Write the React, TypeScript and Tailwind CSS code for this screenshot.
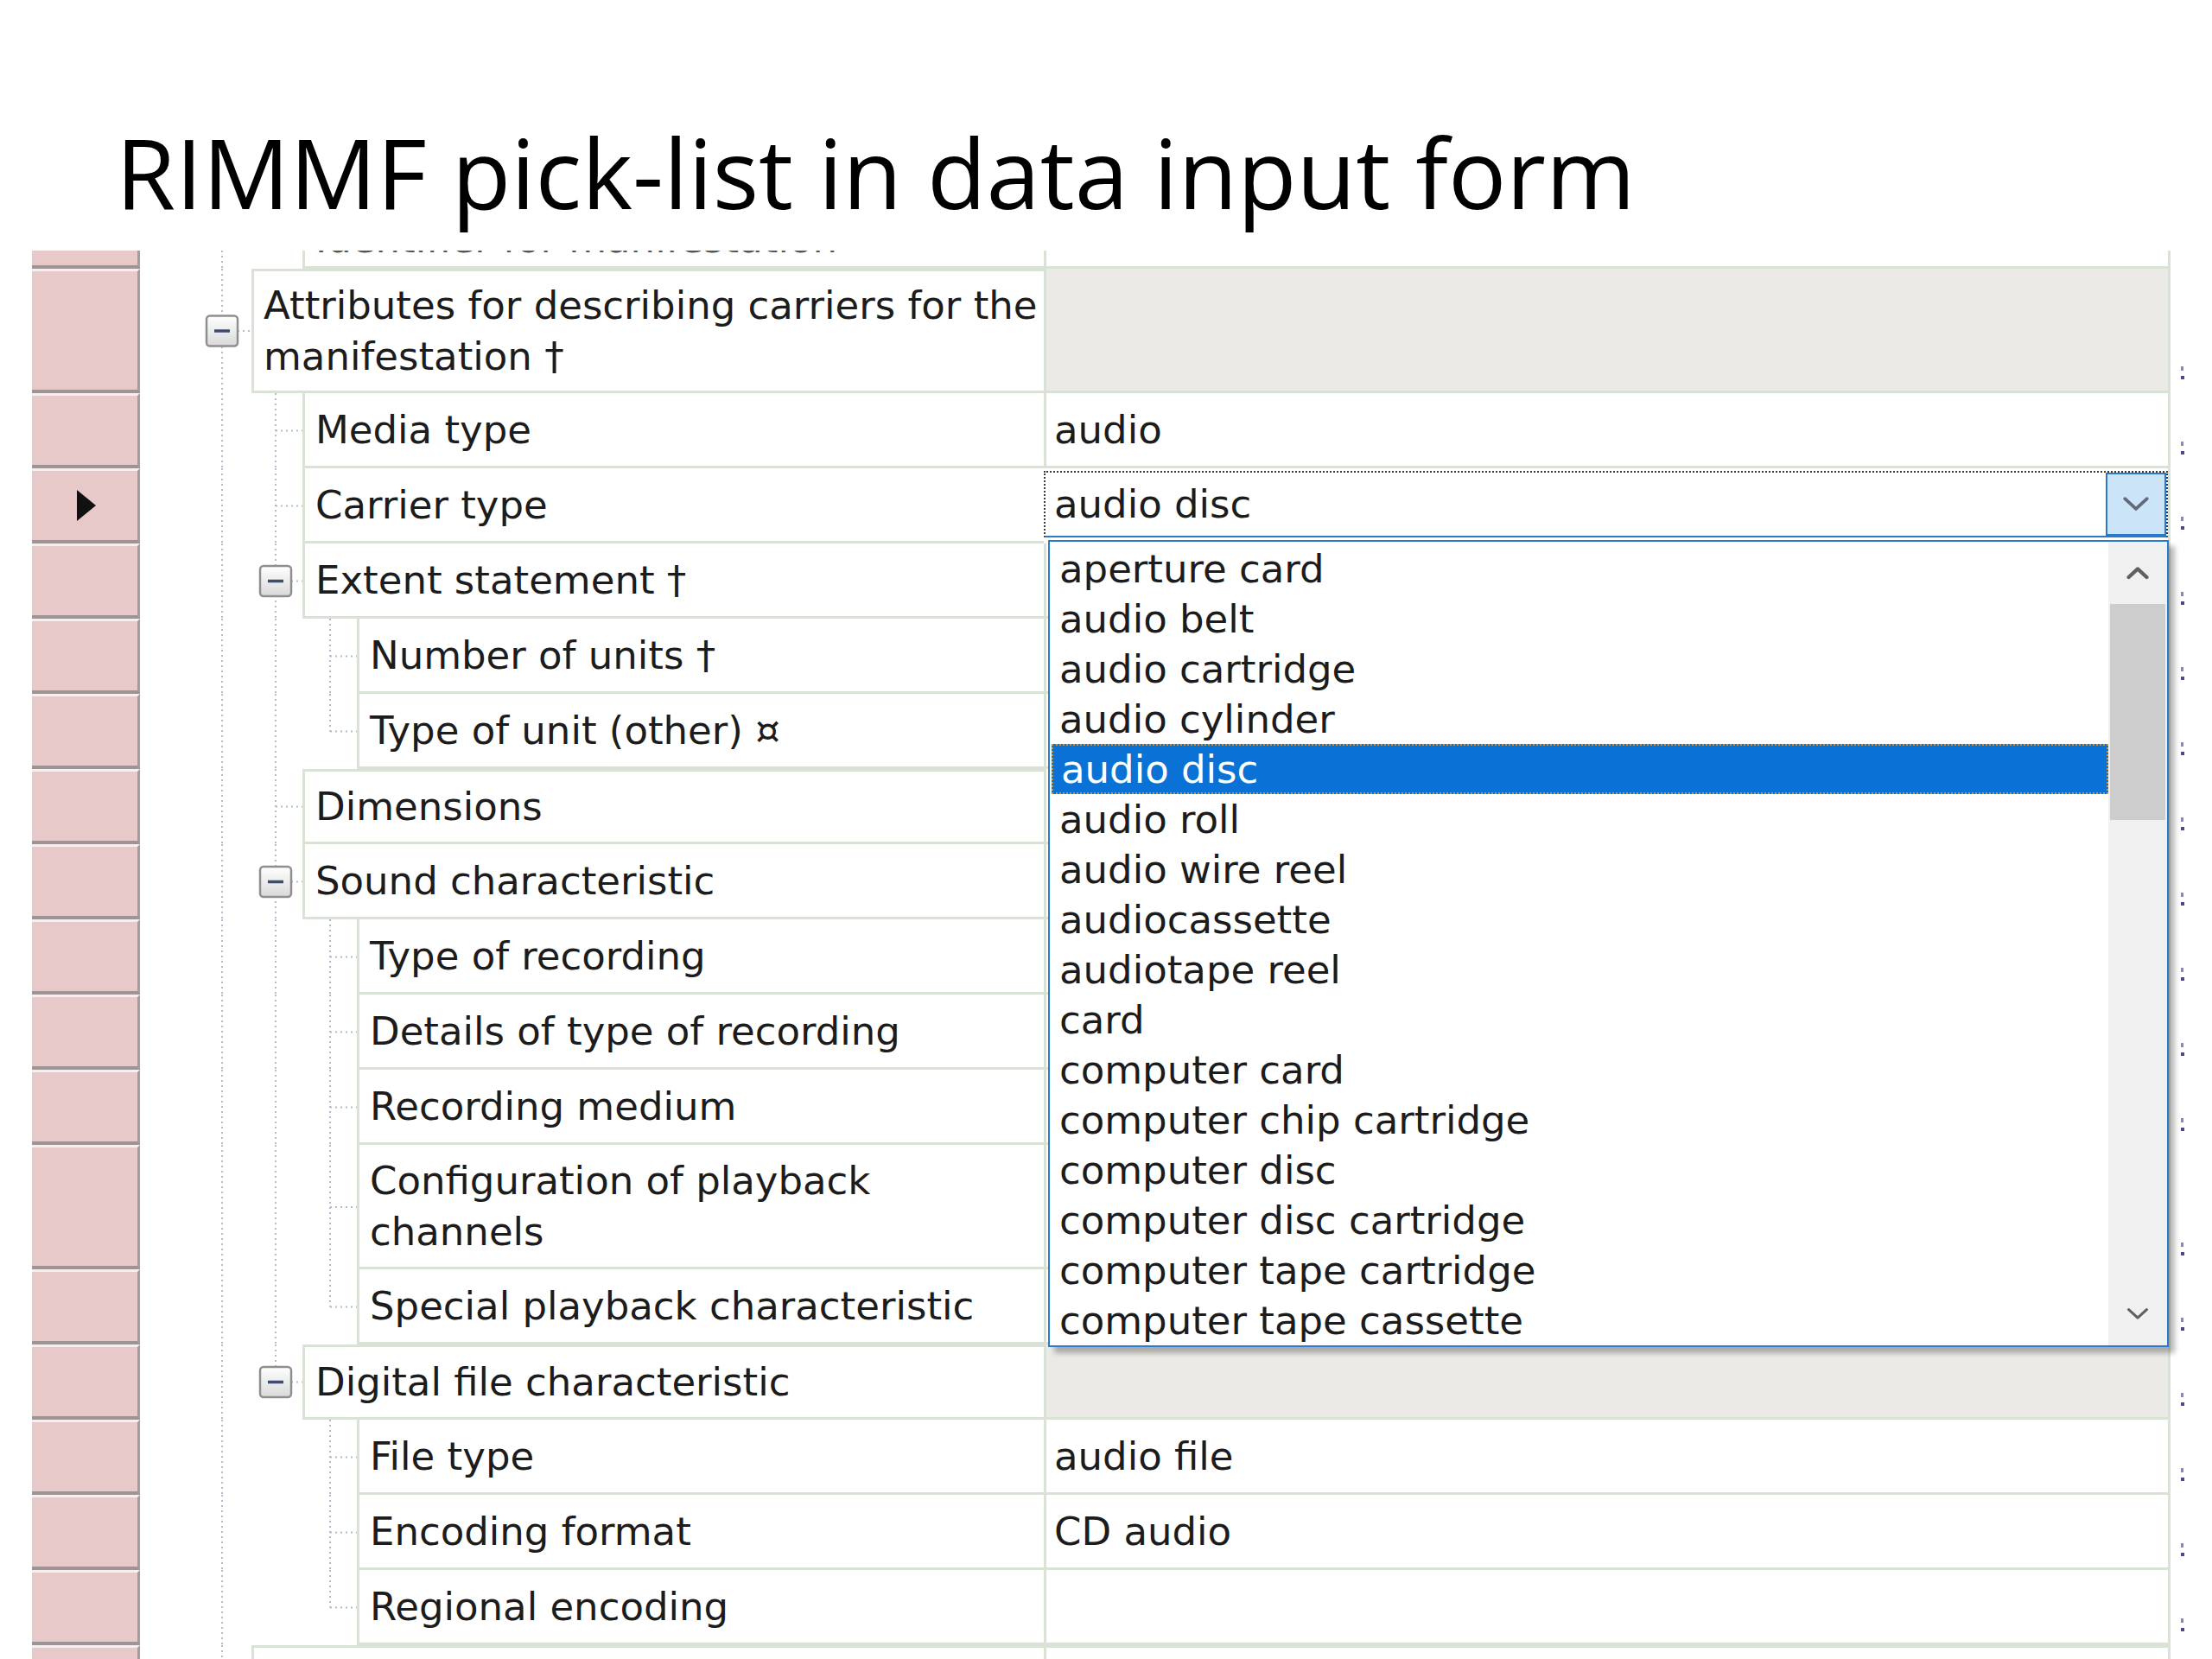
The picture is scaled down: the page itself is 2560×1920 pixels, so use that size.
import React from 'react';

type G = 'none' | 'full' | 'top' | 'bottom';
type Row = {
  label: string[];
  level: 1 | 2 | 3;
  h: number;
  icon?: boolean;
  g2: G;
  g3: G;
  gray?: boolean;
  value?: string;
  combo?: boolean;
  arrow?: boolean;
  clipped?: boolean;
  topBorder?: boolean;
  final?: boolean;
};

const rows: Row[] = [
  { label: ['Identifier for manifestation'], level: 2, h: 21, g2: 'none', g3: 'none', clipped: true },
  { label: ['Attributes for describing carriers for the', 'manifestation †'], level: 1, h: 144, icon: true, g2: 'bottom', g3: 'none', gray: true, topBorder: true },
  { label: ['Media type'], level: 2, h: 87, g2: 'full', g3: 'none', value: 'audio' },
  { label: ['Carrier type'], level: 2, h: 87, g2: 'full', g3: 'none', combo: true, arrow: true },
  { label: ['Extent statement †'], level: 2, h: 87, icon: true, g2: 'full', g3: 'bottom' },
  { label: ['Number of units †'], level: 3, h: 87, g2: 'full', g3: 'full' },
  { label: ['Type of unit (other) ¤'], level: 3, h: 87, g2: 'full', g3: 'top' },
  { label: ['Dimensions'], level: 2, h: 87, g2: 'full', g3: 'none', topBorder: true },
  { label: ['Sound characteristic'], level: 2, h: 87, icon: true, g2: 'full', g3: 'bottom' },
  { label: ['Type of recording'], level: 3, h: 87, g2: 'full', g3: 'full' },
  { label: ['Details of type of recording'], level: 3, h: 87, g2: 'full', g3: 'full' },
  { label: ['Recording medium'], level: 3, h: 87, g2: 'full', g3: 'full' },
  { label: ['Configuration of playback', 'channels'], level: 3, h: 144, g2: 'full', g3: 'full' },
  { label: ['Special playback characteristic'], level: 3, h: 87, g2: 'full', g3: 'top' },
  { label: ['Digital file characteristic'], level: 2, h: 87, icon: true, g2: 'top', g3: 'bottom', gray: true, topBorder: true },
  { label: ['File type'], level: 3, h: 87, g2: 'none', g3: 'full', value: 'audio file' },
  { label: ['Encoding format'], level: 3, h: 87, g2: 'none', g3: 'full', value: 'CD audio' },
  { label: ['Regional encoding'], level: 3, h: 87, g2: 'none', g3: 'top' },
  { label: [''], level: 1, h: 16, g2: 'none', g3: 'none', topBorder: true, final: true },
];

const items = [
  'aperture card',
  'audio belt',
  'audio cartridge',
  'audio cylinder',
  'audio disc',
  'audio roll',
  'audio wire reel',
  'audiocassette',
  'audiotape reel',
  'card',
  'computer card',
  'computer chip cartridge',
  'computer disc',
  'computer disc cartridge',
  'computer tape cartridge',
  'computer tape cassette',
];

const HCLS: Record<number, string> = {
  21: 'h-[21px]',
  87: 'h-[87px]',
  144: 'h-[144px]',
  16: 'h-[16px]',
};
const IW: Record<number, number> = { 1: 129, 2: 188, 3: 251 };
const LCLS: Record<number, string> = { 1: 'w-[917px] pl-[11px]', 2: 'w-[858px] pl-[12px]', 3: 'w-[795px] pl-[12px]' };
const GX: Record<number, number> = { 1: 95, 2: 157, 3: 220 };

const DOT = { stroke: '#b2bccb', strokeWidth: 2, strokeDasharray: '2 4' };

function vline(x: number, mode: G, h: number, mid: number, key: string) {
  if (mode === 'none') return null;
  let y1 = 0;
  let y2 = h;
  if (mode === 'top') y2 = mid;
  if (mode === 'bottom') y1 = mid + 18;
  return <line key={key} x1={x} y1={y1} x2={x} y2={y2} {...DOT} />;
}

function Indent({ r, idx }: { r: Row; idx: number }) {
  const w = IW[r.level];
  const h = r.h;
  const mid = h / 2;
  const gx = GX[r.level];
  const showConn = !r.clipped && !r.final;
  return (
    <svg width={w} height={h} className="shrink-0 block">
      <defs>
        <linearGradient id={`ig${idx}`} x1="0" y1="0" x2="0" y2="1">
          <stop offset="0" stopColor="#ffffff" />
          <stop offset="1" stopColor="#d9d9d9" />
        </linearGradient>
      </defs>
      <line x1={95} y1={0} x2={95} y2={h} {...DOT} />
      {vline(157, r.g2, h, mid, 'g2')}
      {vline(220, r.g3, h, mid, 'g3')}
      {showConn && <line x1={r.icon ? gx + 18 : gx} y1={mid} x2={w} y2={mid} {...DOT} />}
      {r.icon && (
        <g>
          <rect x={gx - 18} y={mid - 17.5} width={36} height={35} rx={4} fill={`url(#ig${idx})`} stroke="#8f8f8f" strokeWidth={2.5} />
          <line x1={gx - 9} y1={mid} x2={gx + 9} y2={mid} stroke="#3e4c6e" strokeWidth={3.5} />
        </g>
      )}
    </svg>
  );
}

function Chevron({ up, color, w = 30 }: { up?: boolean; color: string; w?: number }) {
  return (
    <svg width={w} height={w * 0.6} viewBox="0 0 30 18" className="block">
      <polyline
        points={up ? '3,15 15,4 27,15' : '3,3 15,14 27,3'}
        fill="none"
        stroke={color}
        strokeWidth={up ? 5 : 3.5}
        strokeLinejoin="round"
        strokeLinecap="round"
      />
    </svg>
  );
}

function RowView({ r, idx }: { r: Row; idx: number }) {
  return (
    <div className={`flex ${HCLS[r.h]}`}>
      <div
        className={`ml-[37px] w-[125px] shrink-0 bg-[#e8c9c9] border-r-[3px] border-r-[#a59c9c] ${
          r.clipped ? 'border-b-[4px] border-b-[#9d9595]' : r.final ? 'border-t-[3px] border-t-[#f7efef]' : 'border-t-[3px] border-t-[#f7efef] border-b-[4px] border-b-[#9d9595]'
        } flex items-center justify-center`}
      >
        {r.arrow && (
          <svg width="24" height="38" viewBox="0 0 24 38" className="block ml-[4px]">
            <polygon points="1,1 23,19 1,37" fill="#111" />
          </svg>
        )}
      </div>
      <Indent r={r} idx={idx} />
      <div
        className={`${LCLS[r.level]} shrink-0 border-l-[3px] ${r.final ? '' : 'border-b-[3px]'} ${
          r.topBorder ? 'border-t-[3px]' : ''
        } border-[#d8e2d5] flex ${r.clipped ? 'items-start' : 'items-center'} overflow-hidden bg-white`}
      >
        {r.clipped ? (
          <div className="h-[18px] overflow-hidden">
            <div className="whitespace-nowrap text-[45px] leading-[59px] -mt-[43px] text-[#555]">{r.label[0]}</div>
          </div>
        ) : (
          <div className="whitespace-nowrap text-[45px] leading-[59px]">
            {r.label.map((l, i) => (
              <div key={i}>{l}</div>
            ))}
          </div>
        )}
      </div>
      {r.combo ? (
        <div className="w-[1304px] shrink-0 border-r-[3px] border-[#d8e2d5] pt-[3px] bg-white">
          <div className="h-[77px] flex border-2 border-dotted border-[#3a3a3a] [border-bottom-style:solid] border-b-[#2a78c8] bg-white">
            <div className="flex-1 flex items-center pl-[10px] text-[45px] leading-none">audio disc</div>
            <div className="w-[70px] bg-[#cce4f7] border-2 border-[#2a78c8] flex items-center justify-center">
              <Chevron color="#5f6b78" w={32} />
            </div>
          </div>
        </div>
      ) : (
        <div
          className={`w-[1304px] shrink-0 border-l-[3px] border-r-[3px] ${r.final ? 'border-t-[3px]' : 'border-b-[3px]'} border-[#d8e2d5] ${
            r.gray ? 'bg-[#ebeae6]' : 'bg-white'
          } flex items-center pl-[9px] text-[45px] leading-none whitespace-nowrap`}
        >
          {r.value ?? ''}
        </div>
      )}
      <div className="flex-1 flex flex-col justify-end items-start pl-[12px] pb-[16px] gap-[6px]">
        {!r.clipped && !r.final && (
          <>
            <div className="w-[3px] h-[5px] bg-[#8a8aa8]" />
            <div className="w-[4px] h-[4px] bg-[#4b4b8c]" />
          </>
        )}
      </div>
    </div>
  );
}

function DropList() {
  return (
    <div className="absolute left-[1213px] top-[335px] w-[1297px] h-[934px] border-2 border-[#2a7ad0] bg-white flex shadow-[7px_7px_6px_rgba(0,0,0,0.28)]">
      <div className="flex-1 flex flex-col pt-[2px] pl-[2px]">
        {items.map((it, i) => (
          <div
            key={it}
            className={`h-[58px] shrink-0 flex items-center pl-[9px] text-[45px] leading-none whitespace-nowrap ${
              i === 4 ? 'bg-[#0a72d4] text-white border-2 border-dotted border-[#c8963e]' : 'text-[#1c1c1c]'
            }`}
          >
            {it}
          </div>
        ))}
      </div>
      <div className="w-[68px] shrink-0 bg-[#f0f0f0] flex flex-col">
        <div className="h-[72px] flex items-center justify-center">
          <Chevron up color="#606060" w={26} />
        </div>
        <div className="h-[250px] mx-[2px] bg-[#cdcdcd]" />
        <div className="flex-1" />
        <div className="h-[72px] flex items-center justify-center">
          <Chevron color="#606060" w={26} />
        </div>
      </div>
    </div>
  );
}

export default function App() {
  return (
    <div className="w-[2560px] h-[1920px] bg-white overflow-hidden font-['DejaVu_Sans',sans-serif] text-[#1c1c1c]">
      <div className="h-[290px] pl-[134px] pt-[143px] font-['Open_Sans',sans-serif] text-[112px] leading-none text-black whitespace-nowrap">
        RIMMF pick-list in data input form
      </div>
      <div className="relative">
        {rows.map((r, i) => (
          <RowView key={i} r={r} idx={i} />
        ))}
        <DropList />
      </div>
    </div>
  );
}
